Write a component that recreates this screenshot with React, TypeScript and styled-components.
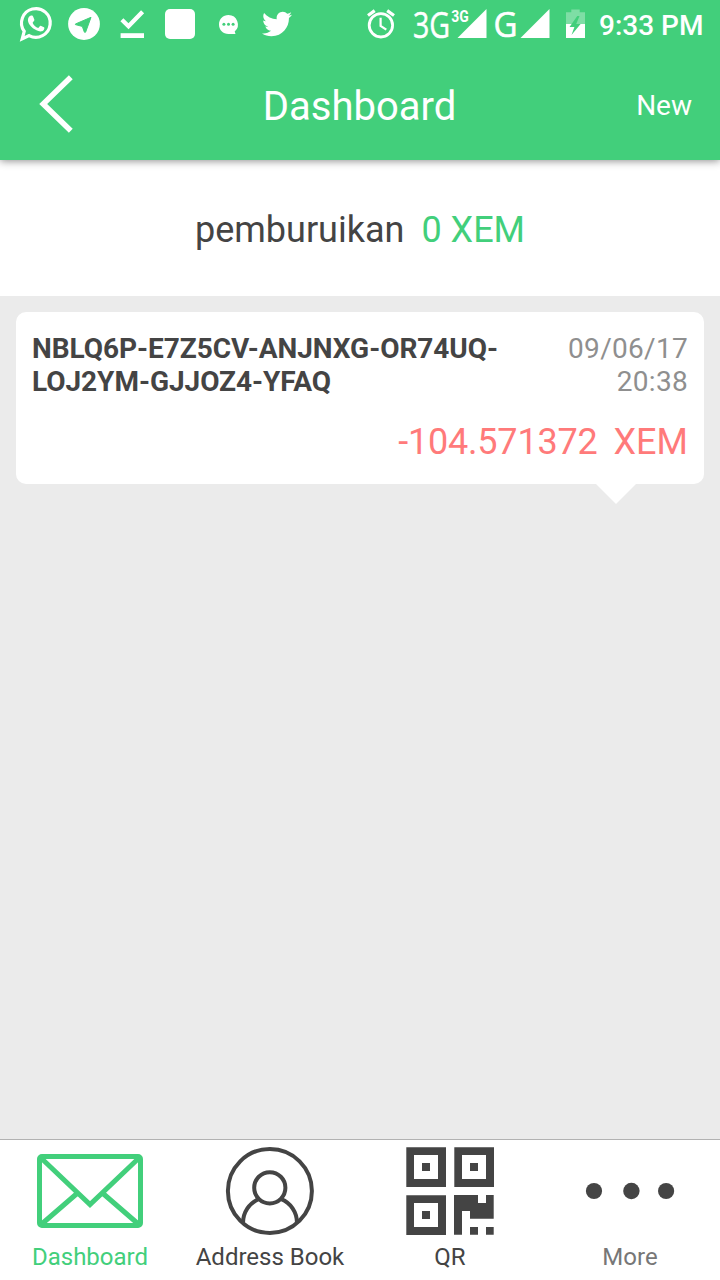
import React from "react";
import styled, { createGlobalStyle } from "styled-components";
import { FaTwitter } from "react-icons/fa";

const GREEN = "#42cf7b";
const INK = "#444444";

const GlobalStyle = createGlobalStyle`
  * { box-sizing: border-box; }
  body { margin: 0; background: #fff; font-family: Roboto, sans-serif; }
  svg { display: block; flex: none; }
`;

const Screen = styled.div`
  width: 720px;
  height: 1280px;
  display: flex;
  flex-direction: column;
  overflow: hidden;
  background: #ebebeb;
`;

const TopArea = styled.header`
  flex: none;
  height: 160px;
  background: ${GREEN};
  color: #fff;
  box-shadow: 0 1px 8px rgba(0, 0, 0, 0.45);
  z-index: 1;
`;

const StatusBar = styled.div`
  height: 50px;
  display: flex;
  justify-content: space-between;
`;

const Notifications = styled.div`
  display: flex;
  padding-left: 18px;
`;

const SystemStatus = styled.div`
  display: flex;
`;

const BirdSlot = styled.span`
  display: flex;
  padding: 9px 0 0 12px;
`;

const Clock = styled.span`
  width: 121px;
  font-size: 28px;
  font-weight: 500;
  line-height: 52px;
  white-space: nowrap;
`;

const TitleBar = styled.div`
  height: 110px;
  display: grid;
  grid-template-columns: 150px 1fr 150px;
  align-items: center;
`;

const BackButton = styled.button`
  padding: 0 0 0 36px;
  border: 0;
  background: none;
  color: inherit;
`;

const Title = styled.h1`
  margin: 0;
  padding: 4px 1px 0 0;
  text-align: center;
  font-size: 40px;
  font-weight: 400;
  line-height: 48px;
`;

const NewButton = styled.button`
  padding: 1px 28px 0 0;
  border: 0;
  background: none;
  color: inherit;
  font: 400 28px/34px Roboto, sans-serif;
  text-align: right;
`;

const Balance = styled.section`
  flex: none;
  height: 136px;
  padding-top: 4px;
  display: flex;
  align-items: center;
  justify-content: center;
  gap: 17px;
  background: #fff;
  color: ${INK};
  font-size: 36px;
  line-height: 42px;
`;

const BalanceAmount = styled.span`
  color: ${GREEN};
`;

const Messages = styled.main`
  flex: 1;
  padding: 16px;
`;

const Bubble = styled.article`
  position: relative;
  height: 172px;
  padding: 20px 16px;
  border-radius: 10px;
  background: #fff;
  color: ${INK};

  &::after {
    content: "";
    position: absolute;
    top: 100%;
    right: 68px;
    border: solid transparent;
    border-width: 20px 20px 0;
    border-top-color: #fff;
  }
`;

const BubbleHead = styled.div`
  display: flex;
  justify-content: space-between;
  font-size: 28px;
  line-height: 33px;
`;

const Address = styled.div`
  width: 480px;
  font-weight: 700;
  letter-spacing: -0.04px;
`;

const Stamp = styled.time`
  width: 130px;
  color: #8f8f8f;
  letter-spacing: 0.3px;
  text-align: right;
`;

const Amount = styled.div`
  display: flex;
  justify-content: flex-end;
  gap: 16px;
  margin-top: 23px;
  color: #ff7a7a;
  font-size: 36px;
  line-height: 42px;
`;

const AmountValue = styled.span`
  letter-spacing: -0.2px;
`;

const TabBar = styled.nav`
  flex: none;
  height: 141px;
  display: grid;
  grid-template-columns: repeat(4, 180px);
  border-top: 1px solid #b2b2b2;
  background: #fff;
`;

const Tab = styled.a<{ $tone?: string }>`
  display: flex;
  flex-direction: column;
  align-items: center;
  padding-top: 3px;
  color: ${(p) => p.$tone ?? INK};
  font-size: 24px;
  line-height: 28px;
`;

const TabLabel = styled.span`
  margin-top: 4px;
`;

const WhatsAppIcon = () => (
  <svg width="36" height="50" viewBox="18 0 36 50" fill="#fff">
    <path
      d="M22.400 39.100L24.400 31.500A14.350 14.350 0 1 1 29.300 35.800Z"
      fill="none"
      stroke="#fff"
      strokeWidth="3.200"
      transform="translate(-.2 -.2)"
    />
    <path d="M27.900 20.300c0-2.600 1.500-4.600 3.200-4.700 1.200-.1 1.700.1 2.100 1.200l1.200 2.900c.3.900-1.500 2.400-1.800 3 .9 2.400 3.200 4.400 5.600 5.200.8-.4 1.600-2.300 2.500-2.200l3.300 1.600c.8.500.1 2.400-.4 3-1.300 1.300-3.400 1.400-5.200.8-5-1.700-10.200-5.900-10.500-10.800z" />
  </svg>
);

const TelegramIcon = () => (
  <svg width="52" height="50" viewBox="54 0 52 50">
    <circle cx="84" cy="24" r="15.900" fill="#fff" />
    <path
      d="M75.400 24L91 17.300L85.600 32.200H84.400L82.300 26.400L75.400 24.600Z"
      fill={GREEN}
      stroke={GREEN}
      strokeWidth="1"
      strokeLinejoin="round"
    />
  </svg>
);

const DoneIcon = () => (
  <svg width="48" height="50" viewBox="106 0 48 50">
    <path d="M121.900 19.800L128.500 26.200L142.600 11.800" fill="none" stroke="#fff" strokeWidth="4.300" />
    <path d="M120.600 33.200H144V38H120.600z" fill="#fff" />
  </svg>
);

const SquareIcon = () => (
  <svg width="56" height="50" viewBox="154 0 56 50">
    <rect x="165" y="9" width="30" height="30" rx="5" fill="#fff" />
  </svg>
);

const ChatIcon = () => (
  <svg width="40" height="50" viewBox="210 0 40 50">
    <path d="M228.500 15C223 15 219 19.100 219 24.500S223 34 228.500 34H235.500L234.700 31.600A9.500 9.500 0 0 0 228.500 15z" fill="#fff" />
    <g fill={GREEN}>
      <circle cx="223.900" cy="24.300" r="1.500" />
      <circle cx="228.500" cy="24.300" r="1.500" />
      <circle cx="233.100" cy="24.300" r="1.500" />
    </g>
  </svg>
);

const AlarmIcon = () => (
  <svg width="40" height="50" viewBox="364 0 40 50" fill="none" stroke="#fff">
    <circle cx="380.900" cy="25.300" r="11.700" strokeWidth="2.800" />
    <path d="M380.600 17.700V26L386.300 29.700" strokeWidth="2.200" />
    <path d="M368 15.500L374.700 10.600M387.200 10.600L394 15.500" strokeWidth="3.200" />
  </svg>
);

const SignalIcons = () => (
  <svg width="154" height="50" viewBox="404 0 154 50" fill="#fff" fontFamily="Open Sans, sans-serif">
    <text x="413" y="37.700" fontSize="36.500" textLength="37.200" lengthAdjust="spacingAndGlyphs" stroke="#fff" strokeWidth=".5">3G</text>
    <path d="M486.500 9V38H457.500z" />
    <text x="451.200" y="21.800" fontSize="16" fontFamily="Roboto, sans-serif" fontWeight="700" textLength="17.500" lengthAdjust="spacingAndGlyphs">3G</text>
    <text x="493.500" y="36.700" fontSize="35.500" textLength="24" lengthAdjust="spacingAndGlyphs" stroke="#fff" strokeWidth=".6">G</text>
    <path d="M549.500 9V38H520.500z" />
  </svg>
);

const BatteryIcon = () => (
  <svg width="41" height="50" viewBox="558 0 41 50">
    <path d="M566 12.300H571.300V9.500H579.700V12.300H585V24H566z" fill="#fff" opacity=".32" />
    <path d="M566 24H585V38H566z" fill="#fff" />
    <path d="M577.300 16L569.500 27H574.400L571.500 35L580.600 24H576.200L579.500 16z" fill={GREEN} />
  </svg>
);

const BackIcon = () => (
  <svg width="40" height="60" viewBox="36 75 40 60">
    <path d="M70.800 77.200L43.200 104L70.800 130.800" fill="none" stroke="#fff" strokeWidth="5.500" />
  </svg>
);

const EnvelopeIcon = () => (
  <svg width="110" height="96" viewBox="35 1143 110 96" fill="none" stroke={GREEN} strokeWidth="5">
    <rect x="39.500" y="1156.500" width="101" height="69" rx="2.500" />
    <path d="M40 1157L90 1204.500L140 1157M40 1225.500L77 1193.500M103 1193.500L140 1225.500" />
  </svg>
);

const ContactIcon = () => (
  <svg width="96" height="96" viewBox="222 1143 96 96" fill="none" stroke={INK} strokeWidth="4">
    <circle cx="269.900" cy="1191" r="42" />
    <circle cx="269.800" cy="1187.800" r="15.600" />
    <path d="M243 1223C243 1212 249.500 1203 258.500 1199.200M281.300 1199.200C290.500 1203 297 1212 297 1223" />
  </svg>
);

const finderCorners = [
  [0, 0],
  [48, 0],
  [0, 48],
];

const QrIcon = () => (
  <svg width="96" height="96" viewBox="-4 -4 96 96" fill={INK}>
    {finderCorners.map(([x, y]) => (
      <path
        key={`${x}-${y}`}
        fillRule="evenodd"
        d={`M${x + 0.3} ${y + 0.3}h39.700v39.700h-39.700zM${x + 8} ${y + 8}v24h24v-24zM${x + 16} ${y + 16}h8v8h-8z`}
      />
    ))}
    <path d="M48 48H72V56H80V48H87.700V71.700H64V64H56V87.700H48zM64 80h8v7.700h-8zM80 80h7.700v7.700h-7.700z" />
  </svg>
);

const MoreIcon = () => (
  <svg width="96" height="96" viewBox="582 1143 96 96" fill={INK}>
    <circle cx="594" cy="1191" r="8.100" />
    <circle cx="631.400" cy="1191" r="8.200" />
    <circle cx="666.100" cy="1191" r="8.100" />
  </svg>
);

export default function App() {
  return (
    <>
      <GlobalStyle />
      <Screen>
        <TopArea>
          <StatusBar>
            <Notifications>
              <WhatsAppIcon />
              <TelegramIcon />
              <DoneIcon />
              <SquareIcon />
              <ChatIcon />
              <BirdSlot>
                <FaTwitter size={30} />
              </BirdSlot>
            </Notifications>
            <SystemStatus>
              <AlarmIcon />
              <SignalIcons />
              <BatteryIcon />
              <Clock>9:33 PM</Clock>
            </SystemStatus>
          </StatusBar>
          <TitleBar>
            <BackButton aria-label="Back">
              <BackIcon />
            </BackButton>
            <Title>Dashboard</Title>
            <NewButton>New</NewButton>
          </TitleBar>
        </TopArea>

        <Balance>
          <span>pemburuikan</span>
          <BalanceAmount>0 XEM</BalanceAmount>
        </Balance>

        <Messages>
          <Bubble>
            <BubbleHead>
              <Address>NBLQ6P-E7Z5CV-ANJNXG-OR74UQ-LOJ2YM-GJJOZ4-YFAQ</Address>
              <Stamp>09/06/17 20:38</Stamp>
            </BubbleHead>
            <Amount>
              <AmountValue>-104.571372</AmountValue>
              <span>XEM</span>
            </Amount>
          </Bubble>
        </Messages>

        <TabBar>
          <Tab $tone={GREEN}>
            <EnvelopeIcon />
            <TabLabel>Dashboard</TabLabel>
          </Tab>
          <Tab>
            <ContactIcon />
            <TabLabel>Address Book</TabLabel>
          </Tab>
          <Tab>
            <QrIcon />
            <TabLabel>QR</TabLabel>
          </Tab>
          <Tab $tone="#777777">
            <MoreIcon />
            <TabLabel>More</TabLabel>
          </Tab>
        </TabBar>
      </Screen>
    </>
  );
}
